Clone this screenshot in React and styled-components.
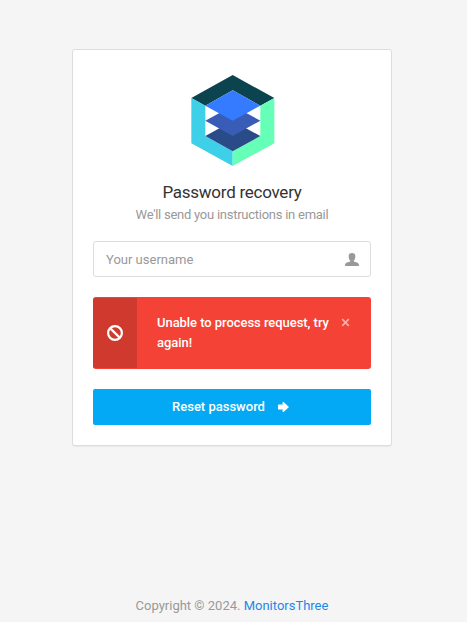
import React from "react";
import styled, { createGlobalStyle } from "styled-components";

const GlobalStyle = createGlobalStyle`
  *, *::before, *::after { box-sizing: border-box; }
  body {
    margin: 0;
    background: #f5f5f5;
    color: #333;
    font: 400 13px/20px Roboto, "Liberation Sans", sans-serif;
  }
`;

const Page = styled.div`
  display: flex;
  flex-direction: column;
  align-items: center;
  height: 622px;
  padding: 49px 3px 6px 0;
  overflow: hidden;
`;

const Card = styled.form`
  width: 320px;
  height: 397px;
  padding: 24px 20px 20px;
  background: #fff;
  border: 1px solid #ddd;
  border-radius: 3px;
  box-shadow: 0 1px 1px rgba(0, 0, 0, 0.05);
`;

const Header = styled.header`
  display: flex;
  flex-direction: column;
  align-items: center;
  text-align: center;
  letter-spacing: -0.255px;
`;

const Logo = styled.svg`
  display: block;
  width: 84px;
  height: 93px;
  margin-left: 2px;
`;

const Title = styled.h5`
  margin: 12px 0 0;
  font-size: 17px;
  font-weight: 400;
  line-height: 26px;
`;

const Subtitle = styled.small`
  font-size: 13px;
  line-height: 20px;
  color: #999;
`;

const Field = styled.label`
  display: flex;
  align-items: center;
  height: 36px;
  margin-top: 16px;
  padding: 0 11px 0 12px;
  border: 1px solid #ddd;
  border-radius: 3px;
`;

const Input = styled.input`
  flex: 1;
  min-width: 0;
  height: 34px;
  padding: 0;
  border: 0;
  outline: 0;
  background: transparent;
  font: inherit;
  color: #333;
  &::placeholder { color: #999; opacity: 1; }
`;

const Icon = styled.svg`
  display: block;
  flex: none;
  width: ${(p) => p.$w}px;
  height: ${(p) => p.$h}px;
`;

const Alert = styled.div`
  display: flex;
  height: 72px;
  margin-top: 20px;
  border: 1px solid #f44336;
  border-left: 0;
  border-radius: 3px;
  background: #f44336;
  color: #fff;
  overflow: hidden;
`;

const AlertIcon = styled.div`
  display: flex;
  align-items: center;
  justify-content: center;
  width: 44px;
  background: #cf392e;
`;

const AlertText = styled.div`
  flex: 1;
  padding: 15px 0 0 20px;
  font-weight: 500;
  letter-spacing: -0.05px;
`;

const Close = styled.button`
  display: flex;
  width: 9px;
  height: 9px;
  margin: 20px 20px 0 0;
  padding: 0;
  border: 0;
  background: none;
  color: #fff;
  opacity: 0.55;
`;

const Submit = styled.button`
  display: flex;
  align-items: center;
  justify-content: center;
  gap: 13px;
  width: 100%;
  height: 36px;
  margin-top: 20px;
  padding: 0 3px 0 0;
  border: 0;
  border-radius: 2px;
  background: #03a9f4;
  color: #fff;
  font: inherit;
  font-weight: 500;
`;

const Footer = styled.footer`
  margin-top: auto;
  color: #999;
`;

const Link = styled.a`
  color: #1e88e5;
  text-decoration: none;
`;

export default function App() {
  return (
    <>
      <GlobalStyle />
      <Page>
        <Card>
          <Header>
            <Logo viewBox="33 24 252 279" aria-hidden="true">
              <path d="M158 27 283 96 241 119 158 73 76 119 34 96Z" fill="#0b444f" />
              <path d="M34 96 76 119V210L158 256V300L34 232Z" fill="#3dd0e8" />
              <path d="M283 96 241 119V210L158 256V300L283 232Z" fill="#66ffb8" />
              <path d="M158 165 241 210 158 256 76 210Z" fill="#294b87" />
              <path d="M158 119 241 164 158 210 76 164Z" fill="#395cb7" />
              <path d="M158 73 241 119 158 164 76 119Z" fill="#347bff" />
            </Logo>
            <Title>Password recovery</Title>
            <Subtitle>We'll send you instructions in email</Subtitle>
          </Header>
          <Field>
            <Input type="text" placeholder="Your username" />
            <Icon $w={14} $h={13} viewBox="0 0 14 13" fill="#999">
              <path d="M7 0C9.3 0 10.4 1 10.3 3.2C10.3 5.2 9.7 6.8 8.8 7.6V8.6C10.5 9.3 14 9.5 14 12.2V13H0V12.2C0 9.5 3.5 9.3 5.2 8.6V7.6C4.3 6.8 3.7 5.2 3.7 3.2C3.6 1 4.7 0 7 0Z" />
            </Icon>
          </Field>
          <Alert role="alert">
            <AlertIcon>
              <Icon $w={16} $h={16} viewBox="0 0 16 16" fill="none" stroke="#fff" strokeWidth="2.2">
                <circle cx="8" cy="8" r="6.9" />
                <path d="M3.1 3.1 12.9 12.9" />
              </Icon>
            </AlertIcon>
            <AlertText>Unable to process request, try again!</AlertText>
            <Close type="button" aria-label="Close">
              <Icon $w={9} $h={9} viewBox="0 0 9 9" fill="none" stroke="currentColor" strokeWidth="1.8">
                <path d="M1.2 1.2 7.8 7.8M7.8 1.2 1.2 7.8" />
              </Icon>
            </Close>
          </Alert>
          <Submit type="button">
            Reset password
            <Icon $w={11} $h={10} viewBox="0 0 11 10" fill="#fff">
              <path d="M4.6 0H5.6L11 5 5.6 10H4.6V7.5H0.6Q0 7.5 0 6.9V3.1Q0 2.5 0.6 2.5H4.6Z" />
            </Icon>
          </Submit>
        </Card>
        <Footer>
          Copyright © 2024. <Link>MonitorsThree</Link>
        </Footer>
      </Page>
    </>
  );
}
